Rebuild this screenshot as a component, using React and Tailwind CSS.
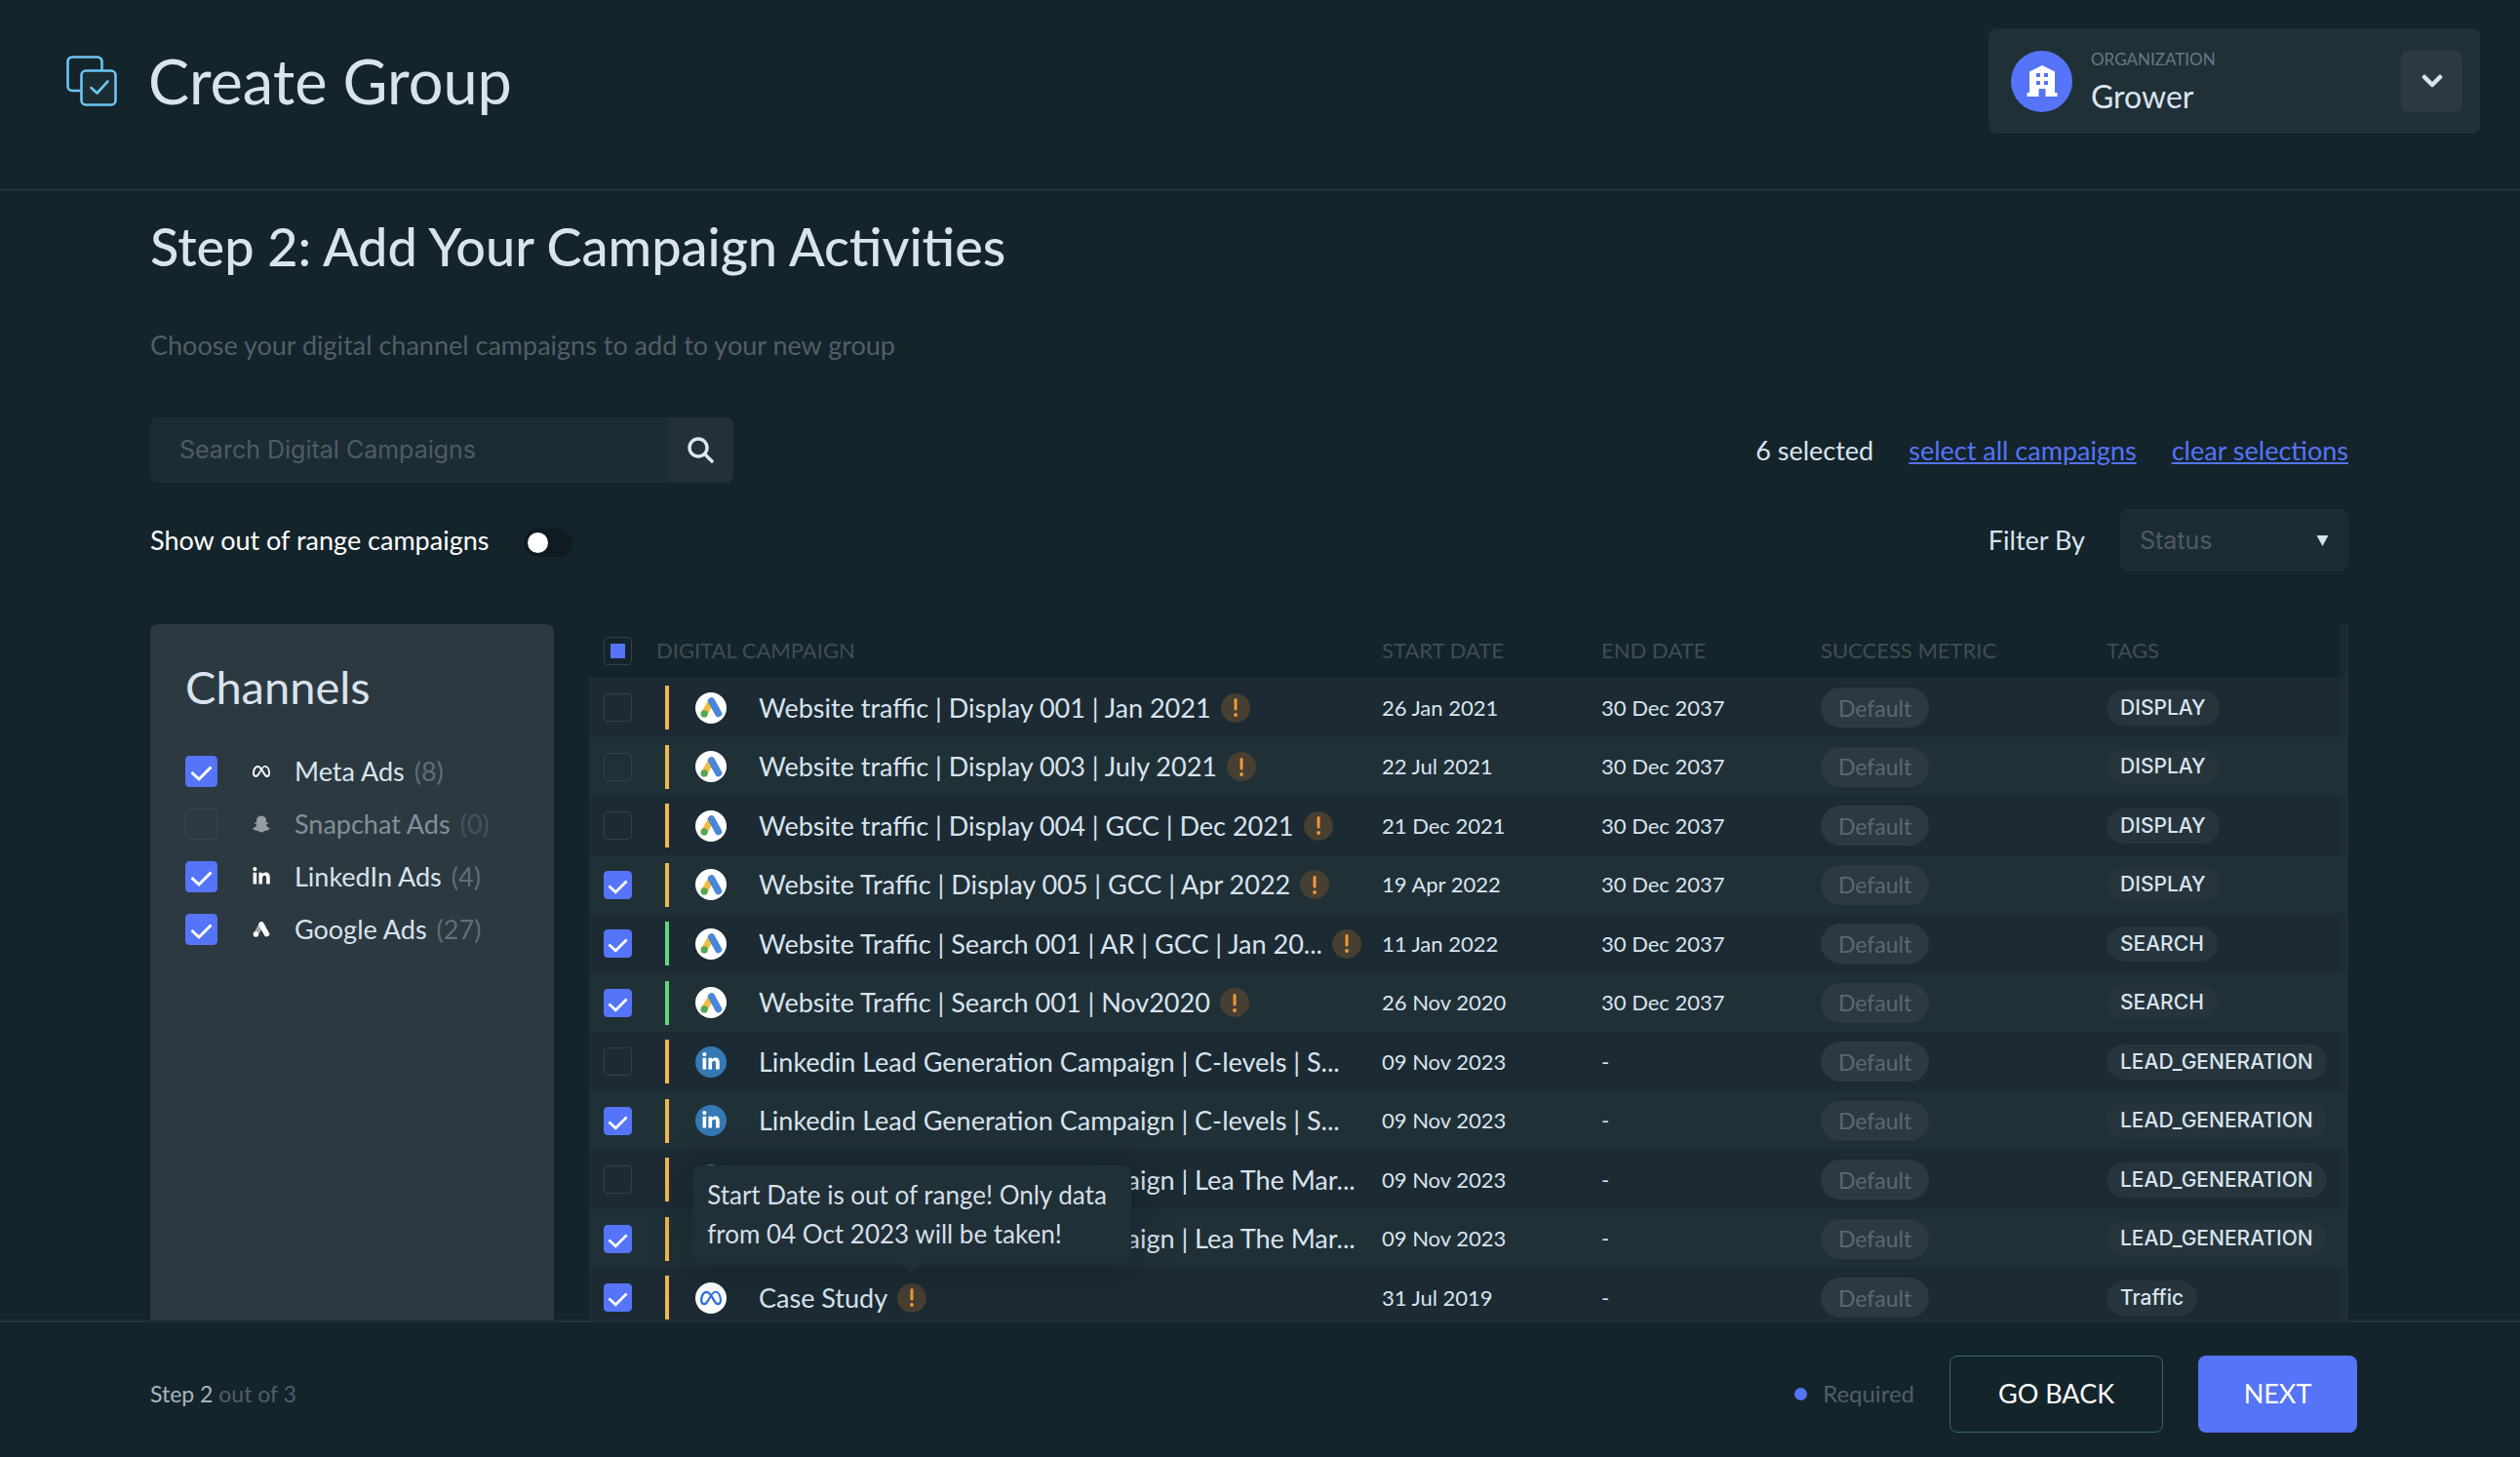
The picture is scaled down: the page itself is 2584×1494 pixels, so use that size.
import React, { useState } from 'react';
import { FaMeta, FaLinkedinIn } from 'react-icons/fa6';
import { FaSnapchatGhost } from 'react-icons/fa';

const channelList = [
  { id: 'meta', nome: 'Meta Ads', count: 8, checked: true },
  { id: 'snapchat', nome: 'Snapchat Ads', count: 0, checked: false },
  { id: 'linkedin', nome: 'LinkedIn Ads', count: 4, checked: true },
  { id: 'google', nome: 'Google Ads', count: 27, checked: true },
];

const campaignList = [
  { id: 1, channel: 'google', name: 'Website traffic | Display 001 | Jan 2021', warn: true, start: '26 Jan 2021', end: '30 Dec 2037', tag: 'DISPLAY' },
  { id: 2, channel: 'google', name: 'Website traffic | Display 003 | July 2021', warn: true, start: '22 Jul 2021', end: '30 Dec 2037', tag: 'DISPLAY' },
  { id: 3, channel: 'google', name: 'Website traffic | Display 004 | GCC | Dec 2021', warn: true, start: '21 Dec 2021', end: '30 Dec 2037', tag: 'DISPLAY' },
  { id: 4, channel: 'google', name: 'Website Traffic | Display 005 | GCC | Apr 2022', warn: true, start: '19 Apr 2022', end: '30 Dec 2037', tag: 'DISPLAY' },
  { id: 5, channel: 'google', name: 'Website Traffic | Search 001 | AR | GCC | Jan 20...', warn: true, live: true, full: true, start: '11 Jan 2022', end: '30 Dec 2037', tag: 'SEARCH' },
  { id: 6, channel: 'google', name: 'Website Traffic | Search 001 | Nov2020', warn: true, live: true, start: '26 Nov 2020', end: '30 Dec 2037', tag: 'SEARCH' },
  { id: 7, channel: 'linkedin', name: 'Linkedin Lead Generation Campaign | C-levels | S...', start: '09 Nov 2023', end: '-', tag: 'LEAD_GENERATION' },
  { id: 8, channel: 'linkedin', name: 'Linkedin Lead Generation Campaign | C-levels | S...', start: '09 Nov 2023', end: '-', tag: 'LEAD_GENERATION' },
  { id: 9, channel: 'linkedin', name: 'Linkedin Lead Generation Campaign | Lea The Mar...', start: '09 Nov 2023', end: '-', tag: 'LEAD_GENERATION' },
  { id: 10, channel: 'linkedin', name: 'Linkedin Lead Generation Campaign | Lea The Mar...', start: '09 Nov 2023', end: '-', tag: 'LEAD_GENERATION' },
  { id: 11, channel: 'meta', name: 'Case Study', warn: true, tip: 'Start Date is out of range! Only data from 04 Oct 2023 will be taken!', start: '31 Jul 2019', end: '-', tag: 'Traffic' },
];

function GroupIcon() {
  return (
    <svg className="w-[52px] h-[52px]" viewBox="0 0 52 52" fill="none" stroke="#6cc5f2" strokeWidth="2.6" strokeLinecap="round" strokeLinejoin="round">
      <path d="M14 36H6a4.500 4.500 0 0 1-4.500-4.500V6A4.500 4.500 0 0 1 6 1.500h26A4.500 4.500 0 0 1 36.500 6v8" />
      <rect x="15.500" y="15.500" width="35" height="35" rx="4.500" fill="#1b2c33" />
      <path d="M25.500 33l6 5.500 11-12" />
    </svg>
  );
}

function BuildingIcon() {
  return (
    <svg className="w-8 h-8" viewBox="0 0 32 32" fill="#fff" fillRule="evenodd">
      <path d="M16 0l13 6.500V28h2.500v4H19.500v-8h-7v8H.5v-4H3V6.500zM10 8v4h4V8zm8 0v4h4V8zm-8 8v4h4v-4zm8 0v4h4v-4z" />
    </svg>
  );
}

function GoogleAdsIcon({ className, left, right, dot }) {
  return (
    <svg className={className} viewBox="0 0 24 22" fill="none" strokeLinecap="round">
      <path d="M12 4L4.500 17.500" stroke={left} strokeWidth="7" />
      <path d="M12 4l7.500 13.500" stroke={right} strokeWidth="7.500" />
      <circle cx="4.300" cy="17.800" r="3.800" fill={dot} />
    </svg>
  );
}

function ChannelIcon({ id }) {
  if (id === 'meta') return <FaMeta className="w-[18px] h-[18px] text-white" />;
  if (id === 'snapchat') return <FaSnapchatGhost className="w-[18px] h-[18px] text-white" />;
  if (id === 'linkedin') return <FaLinkedinIn className="w-5 h-5 text-white" />;
  return <GoogleAdsIcon className="w-[18px] h-4" left="#a3a9ac" right="#fff" dot="#fff" />;
}

function ChannelBadge({ channel }) {
  if (channel === 'linkedin') {
    return (
      <span className="w-8 h-8 shrink-0 rounded-full bg-[#3479b3] text-white flex items-center justify-center">
        <FaLinkedinIn className="w-5 h-5" />
      </span>
    );
  }
  return (
    <span className="w-8 h-8 shrink-0 rounded-full bg-white flex items-center justify-center">
      {channel === 'meta' ? (
        <FaMeta className="w-[22px] h-[22px] text-[#2f6fe4]" />
      ) : (
        <GoogleAdsIcon className="w-[23px] h-[21px]" left="#f2bc42" right="#4a86d8" dot="#55a753" />
      )}
    </span>
  );
}

function Tick({ checked, onChange, label, id, big }) {
  return (
    <span className={big ? 'relative block w-[33px] h-8 shrink-0' : 'relative block w-[29px] h-[29px] shrink-0'}>
      <input
        id={id}
        type="checkbox"
        aria-label={label}
        checked={checked}
        onChange={onChange}
        className={
          big
            ? 'appearance-none block w-full h-full rounded-[4px] border border-[#46545c] checked:border-[#5574f7] checked:bg-[#5574f7]'
            : 'appearance-none block w-full h-full rounded-[4px] border border-[#32414a] checked:border-[#5574f7] checked:bg-[#5574f7]'
        }
      />
      {checked && (
        <svg className="absolute inset-0 w-full h-full pointer-events-none" viewBox="0 0 32 32" fill="none" stroke="#fff" strokeWidth="3">
          <path d="M6 17l7.500 7L26 11.500" />
        </svg>
      )}
    </span>
  );
}

function Warning({ tip }) {
  return (
    <span className="relative ml-[10px] w-[30px] h-[30px] shrink-0 rounded-full bg-[#463f32] flex items-center justify-center">
      <svg className="w-1 h-[19px]" viewBox="0 0 4 19" fill="#f09a37">
        <rect x="0.500" width="3" height="12.500" rx="1.500" />
        <circle cx="2" cy="17" r="1.900" />
      </svg>
      {tip && (
        <span role="tooltip" className="absolute z-10 bottom-[51px] left-1/2 -translate-x-1/2 w-[450px] rounded-lg bg-[#203037] px-[15px] py-[10px] text-[26px] leading-10 whitespace-normal text-[#d5dfe9] shadow-[0_4px_40px_rgba(10,22,28,0.35)]">
          {tip}
          <svg className="absolute top-full left-1/2 -translate-x-1/2 w-6 h-[10px]" viewBox="0 0 24 10" fill="#203037">
            <path d="M0 0h24L12 10z" />
          </svg>
        </span>
      )}
    </span>
  );
}

function App() {
  const [channels, setChannels] = useState(channelList);
  const [selected, setSelected] = useState([4, 5, 6, 8, 10, 11]);

  const toggleChannel = (id) => {
    setChannels(channels.map((c) => (c.id === id ? { ...c, checked: !c.checked } : c)));
  };

  const toggleCampaign = (id) => {
    setSelected(selected.includes(id) ? selected.filter((s) => s !== id) : [...selected, id]);
  };

  return (
    <div className="h-screen flex flex-col overflow-hidden bg-[#14242b] text-[#d9e3ee] font-['Lato','Noto_Sans',sans-serif]">
      <header className="shrink-0 flex items-start justify-between pl-[68px] pr-[41px] pt-[29px] h-[196px] border-b-[3px] border-[#202f36]">
        <div className="flex items-center gap-8 h-[108px]">
          <GroupIcon />
          <h1 className="text-[63px] leading-[72px]">Create Group</h1>
        </div>
        <div className="flex items-center w-[504px] h-[108px] pl-[23px] pr-[18px] rounded-lg bg-[#203037]">
          <span className="w-[63px] h-[63px] rounded-full bg-[#5574f7] flex items-center justify-center">
            <BuildingIcon />
          </span>
          <div className="ml-[19px] flex-1">
            <div className="text-[17px] leading-6 text-[#647987]">ORGANIZATION</div>
            <div className="mt-2 text-[32px] leading-9">Grower</div>
          </div>
          <button aria-label="Change organization" className="w-[63px] h-[63px] rounded-lg bg-[#2c3943] flex items-center justify-center">
            <svg className="w-[22px] h-[14px]" viewBox="0 0 22 14" fill="none" stroke="#d9e3ee" strokeWidth="4.500" strokeLinecap="round" strokeLinejoin="round">
              <path d="M3 3l8 8 8-8" />
            </svg>
          </button>
        </div>
      </header>

      <main className="flex-1 min-h-0 flex flex-col pl-[154px] pr-[176px] pt-[27px]">
        <h2 className="text-[54px] leading-[60px] font-medium">Step 2: Add Your Campaign Activities</h2>
        <p className="mt-[55px] text-[27px] leading-8 text-[#505f67]">Choose your digital channel campaigns to add to your new group</p>

        <div className="mt-[58px] flex items-center justify-between">
          <div className="flex w-[598px] h-[67px] rounded-lg overflow-hidden bg-[#1c2c34]">
            <input
              aria-label="Search Digital Campaigns"
              placeholder="Search Digital Campaigns"
              className="flex-1 min-w-0 px-[30px] text-[25px] font-['Inter','Noto_Sans',sans-serif] placeholder:text-[#4d5c64] focus:outline-none"
            />
            <button aria-label="Search" className="w-[67px] bg-[#223138] flex items-center justify-center">
              <svg className="w-[27px] h-[27px]" viewBox="0 0 27 27" fill="none" stroke="#dbe5f3" strokeWidth="3.500" strokeLinecap="round">
                <circle cx="11" cy="11" r="9" />
                <path d="M17.800 17.800l7.200 7.200" />
              </svg>
            </button>
          </div>
          <div className="flex items-center gap-9 text-[27px] leading-8">
            <span>{selected.length} selected</span>
            <a href="#all" className="text-[#5574f7] underline">select all campaigns</a>
            <a href="#clear" className="text-[#5574f7] underline">clear selections</a>
          </div>
        </div>

        <div className="mt-[27px] flex items-center justify-between h-16 text-[27px] leading-8">
          <label className="flex items-center gap-9 text-white">
            Show out of range campaigns
            <input
              type="checkbox"
              role="switch"
              className="appearance-none mt-1 w-[50px] h-[29px] rounded-full bg-[#0f1b21] before:block before:w-[21px] before:h-[21px] before:m-1 before:rounded-full before:bg-white checked:before:ml-[25px]"
            />
          </label>
          <div className="flex items-center gap-9">
            <label htmlFor="status">Filter By</label>
            <div className="relative">
              <select id="status" className="appearance-none block w-[234px] h-16 pl-5 rounded-lg bg-[#1c2c34] text-[25px] text-[#4d5c64] font-['Inter','Noto_Sans',sans-serif]">
                <option>Status</option>
              </select>
              <svg className="absolute right-5 top-[27px] w-[13px] h-[11px] pointer-events-none" viewBox="0 0 12 11" fill="#d5e3ea">
                <path d="M0 0h12L6 11z" />
              </svg>
            </div>
          </div>
        </div>

        <div className="mt-[54px] flex-1 min-h-0 flex gap-9">
          <aside className="w-[414px] shrink-0 rounded-t-lg bg-[#2c3940] px-9 pt-9">
            <h3 className="text-[47px] leading-[56px]">Channels</h3>
            <ul className="mt-8">
              {channels.map((c) => (
                <li key={c.id} className={c.count === 0 ? 'opacity-50' : ''}>
                  <label htmlFor={c.id} className="flex items-center h-[54px] text-[27px] leading-8">
                    <Tick big id={c.id} checked={c.checked} onChange={() => toggleChannel(c.id)} />
                    <span className="ml-[35px] mr-6 w-5 flex justify-center">
                      <ChannelIcon id={c.id} />
                    </span>
                    {c.nome}
                    <span className="ml-[10px] text-[#5f6e77]">({c.count})</span>
                  </label>
                </li>
              ))}
            </ul>
          </aside>

          <div className="relative flex-1 min-w-0 overflow-hidden">
            <table className="w-full table-fixed border-collapse text-left text-[22px] leading-7">
              <colgroup>
                <col className="w-[69px]" />
                <col />
                <col className="w-[225px]" />
                <col className="w-[225px]" />
                <col className="w-[293px]" />
                <col className="w-[248px]" />
              </colgroup>
              <thead>
                <tr className="h-[55px] text-[#3f4e56] border-b border-[#202f36]">
                  <th className="pl-[15px]">
                    <span className="relative block w-[29px] h-[29px]">
                      <input type="checkbox" aria-label="Select all" className="appearance-none block w-full h-full rounded-[4px] border border-[#32414a]" />
                      <span className="absolute left-[7px] top-[7px] w-[15px] h-[15px] bg-[#5574f7] pointer-events-none" />
                    </span>
                  </th>
                  <th className="font-normal">DIGITAL CAMPAIGN</th>
                  <th className="font-normal">START DATE</th>
                  <th className="font-normal">END DATE</th>
                  <th className="font-normal">SUCCESS METRIC</th>
                  <th className="font-normal">TAGS</th>
                </tr>
              </thead>
              <tbody>
                {campaignList.map((item) => (
                  <tr key={item.id} className="h-[60px] odd:h-[61px] bg-[#203037] odd:bg-[#1c2b33]">
                    <td className="pl-[15px]">
                      <Tick label={item.name} checked={selected.includes(item.id)} onChange={() => toggleCampaign(item.id)} />
                    </td>
                    <td>
                      <div className="flex items-center pl-[9px] pr-[26px] whitespace-nowrap">
                        <span className={item.live ? 'w-1 h-[45px] shrink-0 bg-[#62d57c]' : 'w-1 h-[45px] shrink-0 bg-[#f5b54f]'} />
                        <span className="ml-[27px] mr-[33px]">
                          <ChannelBadge channel={item.channel} />
                        </span>
                        <span className={item.full ? 'flex-1 text-[27px] leading-8' : 'text-[27px] leading-8'}>{item.name}</span>
                        {item.warn && <Warning tip={item.tip} />}
                      </div>
                    </td>
                    <td>{item.start}</td>
                    <td>{item.end}</td>
                    <td>
                      <span className="inline-flex items-center h-[41px] px-[18px] rounded-full bg-[#2c3943] text-[23px] text-[#5a6871] align-middle">Default</span>
                    </td>
                    <td>
                      <span className="inline-flex items-center h-9 px-[14px] rounded-full bg-[#26353c] text-[21px] font-medium font-['Inter','Noto_Sans',sans-serif] align-middle">{item.tag}</span>
                    </td>
                  </tr>
                ))}
              </tbody>
            </table>
            <div className="absolute inset-y-0 right-0 w-3 bg-gradient-to-r from-transparent to-[#203037] pointer-events-none" />
          </div>
        </div>
      </main>

      <footer className="shrink-0 h-[141px] flex items-center justify-between pl-[154px] pr-[167px] pt-2 border-t-[3px] border-[#202f36]">
        <div className="text-[23px] leading-7 text-[#505f67]">
          <span className="text-[#a9b5bf]">Step 2</span> out of 3
        </div>
        <div className="flex items-center gap-9">
          <div className="flex items-center gap-4 text-[24px] leading-7 text-[#505f67]">
            <span className="w-[13px] h-[13px] rounded-full bg-[#5574f7]" />
            Required
          </div>
          <button className="w-[219px] h-[79px] rounded-lg border border-[#3a6478] text-white text-[27px]">GO BACK</button>
          <button className="w-[163px] h-[79px] rounded-lg bg-[#5574f7] text-white text-[27px]">NEXT</button>
        </div>
      </footer>
    </div>
  );
}

export default App;
